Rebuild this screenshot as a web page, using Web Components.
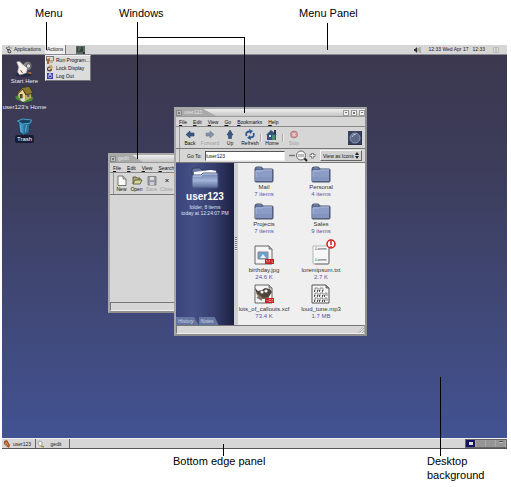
<!DOCTYPE html>
<html lang="en">
<head>
<meta charset="utf-8">
<title>Desktop overview</title>
<style>
  html, body { margin: 0; height: 100%; }
  body { background: #fff; color: #000; font-family: "Liberation Sans", Arial, sans-serif; overflow: hidden; }
</style>
</head>
<body>
<desktop-figure></desktop-figure>

<script>
const define = (name, html, setup) => {
  const tpl = document.createElement('template');
  tpl.innerHTML = html;
  customElements.define(name, class extends HTMLElement {
    constructor() {
      super();
      this.attachShadow({ mode: 'open' }).append(tpl.content.cloneNode(true));
    }
    connectedCallback() { if (setup) setup(this, this.shadowRoot); }
  });
};

/* ---------- icons ---------- */
const folder = `<svg viewBox="0 0 20 17"><path d="M1 3Q1 1 3 1H7Q8 1 9 3H18Q19 3 19 4V15Q19 16 18 16H2Q1 16 1 15Z" fill="#5a6b94" stroke="#4b546b"/><path d="M1.500 5Q1.500 4 2.500 4H8L10 3.500H18V15H2Z" fill="#8b9dc6"/><path d="M2 15V5H8L10 4H18" fill="none" stroke="#a9b8dc"/><path d="M2 11H18V15H2Z" fill="#8395bf"/><path d="M3 2H7" stroke="#7f93bd"/></svg>`;
const icons = {
  folder,
  'folder-large': `<svg viewBox="0 0 28 22"><defs><linearGradient id="g" x2="0" y2="1"><stop stop-color="#6c80ae"/><stop offset=".5" stop-color="#a3b4d8"/><stop offset="1" stop-color="#566894"/></linearGradient></defs><path d="M1 3Q1 1 3 1H9L11 3H26V20H2Z" fill="#66789f" stroke="#303c60"/><path d="M3 8V5L20 3L25 4V8Z" fill="#fff"/><path d="M1 8H10L12 6H27V19Q27 21 25 21H3Q1 21 1 19Z" fill="url(#g)" stroke="#46557f"/><path d="M2 9H10L12 7H26" fill="none" stroke="#c6d2ec"/></svg>`,
  foot: `<svg viewBox="0 0 8 8"><path d="M2 1Q1 3 3 4L5 3M3 4Q2 7 5 7Q7 6 5 4Q4 3 3 4" fill="none" stroke="#444"/><circle cx="4" cy="1" r=".8" fill="#555"/><circle cx="6" cy="2" r=".7" fill="#777"/></svg>`,
  terminal: `<svg viewBox="0 0 9 8"><path d="M0 0H9V8H0Z" fill="#5c6862"/><path d="M1 1H7V6H1Z" fill="#36453f"/><path d="M2 2H5M2 4H4" stroke="#8ea69a" stroke-width=".7"/><path d="M7 6H9V8H7Z" fill="#333"/></svg>`,
  speaker: `<svg viewBox="0 0 8 8"><path d="M1 3H2L4 1V7L2 5H1Z" fill="#333"/><path d="M5 2V6M7 1V7" stroke="#777" stroke-width=".8"/></svg>`,
  note: `<svg viewBox="0 0 6 6"><path d="M.5.5H5.500V5.500H.5Z" fill="#ddd" stroke="#bbb"/><path d="M2 2H4M2 4H4" stroke="#aaa"/></svg>`,
  run: `<svg viewBox="0 0 8 8"><path d="M0 0H8V5H0Z" fill="#777"/><path d="M1 1H7V4H1Z" fill="#dfd9c8"/><path d="M1 3L4 2L3 8H1Z" fill="#a4643c"/><path d="M4 4H7V7H4Z" fill="#b7ae90"/></svg>`,
  lock: `<svg viewBox="0 0 8 8"><circle cx="3.500" cy="5" r="2.500" fill="#4b3a30"/><path d="M3 1H6L7 4L4 6Z" fill="#c9a865"/><circle cx="3" cy="5" r="1" fill="#eee"/></svg>`,
  logout: `<svg viewBox="0 0 8 8"><path d="M1 1H7V7H1Z" fill="#3a3d9c"/><circle cx="4" cy="4" r="1.800" fill="none" stroke="#b9bef5" stroke-width=".8"/><path d="M4 1V4" stroke="#fff" stroke-width=".8"/></svg>`,
  start: `<svg viewBox="0 0 18 17"><ellipse cx="8" cy="14.500" rx="8" ry="2" fill="#252742"/><circle cx="12" cy="6" r="4.500" fill="#8d8d92" stroke="#3c3c42"/><circle cx="13" cy="6" r="2.300" fill="#d8d8da" stroke="#55555c"/><path d="M1 2Q4 0 6 3L8 5L12 8L11 13L8 14L4 15L2 12L3 7Z" fill="#f4f1ea" stroke="#777" stroke-width=".6"/><path d="M5 10L7 13" stroke="#c33"/><path d="M11 13L16 14L15 12" fill="#c98a35"/></svg>`,
  home: `<svg viewBox="0 0 20 17"><path d="M0 11L6 8L19 11L18 15L10 17L2 14Z" fill="#4a8b36"/><path d="M3 6L8 3L11 9V15L4 12Z" fill="#e9d88f"/><path d="M11 9L17 6V12L11 15Z" fill="#c3a95a"/><path d="M2 7L8 1L15 0L19 7L12 9L8 3L3 8Z" fill="#8d7630" stroke="#332b16" stroke-width=".8"/><path d="M5 8H8V13L5 12Z" fill="#51442c"/><path d="M13 9H15V11H13Z" fill="#43567b"/><path d="M5 14L9 12L11 15L8 16Z" fill="#ddd"/></svg>`,
  trash: `<svg viewBox="0 0 16 17"><path d="M2 4L14 3L12 15L7 17L3 14Z" fill="#3c8fbd" stroke="#123a55"/><path d="M7 6L13 4L12 15L7 16Z" fill="#2a7099"/><path d="M1 3L6 1L15 2L14 5L6 6Z" fill="#16415f" stroke="#4ba4cd"/><path d="M4 7L5 14M10 7L9 14" stroke="#6cbbe0" stroke-width=".8"/></svg>`,
  back: `<svg viewBox="0 0 12 11"><path d="M2 5.500L6 2V4H10V7H6V9Z" fill="#3b5a86" stroke="#253c5e" stroke-width=".6"/></svg>`,
  forward: `<svg viewBox="0 0 12 11"><path d="M10 5.500L6 2V4H2V7H6V9Z" fill="#8391a6" stroke="#727f93" stroke-width=".6"/></svg>`,
  up: `<svg viewBox="0 0 12 11"><path d="M6 1L9 6H7.500V9.500H4.500V6H3Z" fill="#3b5a86" stroke="#253c5e" stroke-width=".6"/></svg>`,
  refresh: `<svg viewBox="0 0 12 11"><path d="M2.500 7Q1 2.500 6 2.500M9.500 4Q11 8.500 6 8.500" fill="none" stroke="#315892" stroke-width="1.800"/><path d="M5 0L9 2L6 5ZM7 11L3 9L6 6Z" fill="#315892"/></svg>`,
  house: `<svg viewBox="0 0 12 11"><path d="M0 6L5 1L11 6H10V11H1V6Z" fill="#33527d"/><path d="M8 1H10V5H8Z" fill="#334"/><path d="M3 6H5V8H3Z" fill="#d7e2ee"/><path d="M6 6H9V11H6Z" fill="#4d8b74"/></svg>`,
  stop: `<svg viewBox="0 0 12 11"><circle cx="6" cy="5.500" r="3.500" fill="#cf9a9a" stroke="#b87d7d"/><path d="M4.500 4L7.500 7M7.500 4L4.500 7" stroke="#f3e4e4"/></svg>`,
  throbber: `<svg viewBox="0 0 14 14"><path d="M0 0H14V14H0Z" fill="#39415e"/><circle cx="7" cy="7" r="5" fill="#5c6888" stroke="#8f9ab5"/><path d="M4 6Q5 3 8 3" stroke="#c3cbdd" fill="none"/><path d="M0 14H14V0" fill="none" stroke="#1e2438"/></svg>`,
  zoom: `<svg viewBox="0 0 28 12"><path d="M0 5.500H6" stroke="#777" stroke-width="1.500"/><path d="M15 8L18 11" stroke="#222" stroke-width="2"/><circle cx="12" cy="5.500" r="4.500" fill="#f5f5f5" stroke="#666"/><path d="M10 4V7M12 4V7M14 4V7" stroke="#666" stroke-width=".8"/><path d="M23.500 3V8.500M20.500 5.500H26.500" stroke="#888" stroke-width="3"/><path d="M23.500 4V7.500M21.500 5.500H25.500" stroke="#eee"/></svg>`,
  'new': `<svg viewBox="0 0 12 11"><path d="M2 1H7L10 4V10.500H2Z" fill="#fdfdf8" stroke="#555" stroke-width=".8"/><path d="M7 1V4H10" fill="#ccc" stroke="#555" stroke-width=".7"/></svg>`,
  open: `<svg viewBox="0 0 12 11"><path d="M2 9V2H5L6 3H9V5" fill="#a9ab71" stroke="#4b4d2f" stroke-width=".8"/><path d="M2 9L4 5H11L9 9Z" fill="#d7d99c" stroke="#4b4d2f" stroke-width=".8"/></svg>`,
  save: `<svg viewBox="0 0 12 11"><path d="M2 1.500H10V10H2Z" fill="#9a9fa8" stroke="#777" stroke-width=".8"/><path d="M4 2H8V5H4Z" fill="#ddd"/><path d="M4 7H8V10H4Z" fill="#c9cdd2"/></svg>`,
  close: `<svg viewBox="0 0 12 11"><path d="M4.500 4L7.500 7M7.500 4L4.500 7" stroke="#333"/></svg>`,
  jpg: `<svg viewBox="0 0 20 20"><path d="M1 1H15L18 4V19H1Z" fill="#f5f5f5" stroke="#666"/><path d="M15 1V4H18" fill="#bbb" stroke="#555" stroke-width=".7"/><path d="M4 7H14V14H4Z" fill="#68a2d2" stroke="#888"/><path d="M6 13L9 9L12 13Z" fill="#eee"/><path d="M11 14H20V19H11Z" fill="#c32127"/><path d="M12 15.500H13V17.500M15 17.500V15.500H16M18 15.500V17.500H19" stroke="#f3c9c9" stroke-width=".6" fill="none"/></svg>`,
  xcf: `<svg viewBox="0 0 20 20"><path d="M1 1H15L18 4V19H1Z" fill="#f5f5f5" stroke="#666"/><path d="M15 1V4H18" fill="#bbb" stroke="#555" stroke-width=".7"/><path d="M1 4L4 7L8 6L11 4L16 5L18 8L14 14L8 14L3 11Z" fill="#4d443a"/><path d="M3 9L9 14L15 13L14 15H5Z" fill="#8a7457"/><circle cx="8" cy="8" r="1.600" fill="#fff"/><circle cx="12" cy="7" r="1.600" fill="#fff"/><path d="M3 13L8 16" stroke="#777" stroke-width="1.500"/><path d="M11 14H20V19H11Z" fill="#c32127"/><path d="M12 15.500L14 17.500M17 15.500H15V17.500H17M18 18V15.500H19" stroke="#f3c9c9" stroke-width=".6" fill="none"/></svg>`,
  text: `<svg viewBox="0 0 20 20"><path d="M2 1H18V18Q18 19 17 19H3Q2 19 2 18Z" fill="#f6f6f6" stroke="#b5b5b5"/><path d="M18 3V18Q18 19 17 19H4" fill="none" stroke="#777"/></svg>`,
  mp3: `<svg viewBox="0 0 20 20"><path d="M1 1H15L18 4V19H1Z" fill="#f5f5f5" stroke="#555"/><path d="M15 1V4H18" fill="#999" stroke="#444" stroke-width=".7"/><path d="M4 7V4H7V7M9 7V4H12V7M4 12V9H7V12M9 12V9H12V12M14 12V9H16V12M4 17V14H7V17M9 17V14H12V17M14 17V14H16V17" fill="none" stroke="#777" stroke-width=".8"/><path d="M3 7H4M6 7H7M8 7H9M11 7H12M3 12H4M6 12H7M8 12H9M11 12H12M13 12H14M3 17H4M6 17H7M8 17H9M11 17H12M13 17H14" stroke="#222" stroke-width="1.500"/></svg>`,
  alert: `<svg viewBox="0 0 10 10"><circle cx="5" cy="5" r="4" fill="#fff" stroke="#d8141c" stroke-width="1.500"/><path d="M5 2V6M5 7V8" stroke="#d8141c" stroke-width="1.500"/></svg>`,
  nautilus: `<svg viewBox="0 0 8 8"><path d="M1 1L4 0L7 5L6 8L3 6L1 4Z" fill="#a8502e"/><path d="M3 2L5 5M2 3L4 6" stroke="#e2b56b" stroke-width=".7"/></svg>`,
  gedit: `<svg viewBox="0 0 8 8"><path d="M1 3Q1 1 3 1L5 2V5L3 6Q1 5 1 3Z" fill="#f4f4f0" stroke="#888" stroke-width=".7"/><path d="M4 6L7 7" stroke="#b2913c" stroke-width="1.500"/></svg>`
};
define('gl-icon', `<style>
  :host { display: block; flex: none; width: 8px; height: 8px; }
  svg { display: block; width: 100%; height: 100%; }
</style>`, (el, root) => root.append(document.createRange().createContextualFragment(icons[el.getAttribute('name')])));

/* ---------- annotations ---------- */
define('call-out', `<style>
  :host { position: absolute; font-size: 11px; line-height: 14px; white-space: nowrap; }
</style><slot></slot>`);

define('pointer-line', `<style>
  :host { position: absolute; width: 1px; height: 1px; background: #000; pointer-events: none; }
</style>`);

/* ---------- top panel ---------- */
define('menu-panel', `<style>
  :host { display: flex; align-items: stretch; height: 10px; box-sizing: border-box; background: #d6d6d6; border-bottom: 1px solid #8b8b92; font-size: 5px; line-height: 9px; color: #222; }
  button { font: inherit; color: inherit; border: 0; margin: 0; background: none; display: flex; align-items: center; gap: 1px; padding: 0 4px 0 3px; }
  button.open { background: #f0f0f0; padding: 0 2px; border-right: 1px solid #777; }
  .launch { padding: 0 10px; }
  .launch gl-icon { width: 9px; }
  .tray { margin-left: auto; display: flex; align-items: center; gap: 4px; padding-right: 8px; white-space: nowrap; }
  .tray .speaker { margin-right: 4px; }
  .tray .note { width: 6px; height: 6px; margin-left: 4px; }
</style>
<button type="button"><gl-icon name="foot"></gl-icon>Applications</button>
<button type="button" class="open" aria-expanded="true">Actions</button>
<button type="button" class="launch" aria-label="Terminal"><gl-icon name="terminal"></gl-icon></button>
<div class="tray"><gl-icon class="speaker" name="speaker"></gl-icon><time>12:33 Wed Apr 17</time><time>12:33</time><gl-icon class="note" name="note"></gl-icon></div>`);

define('pop-menu', `<style>
  :host { position: absolute; box-sizing: border-box; width: 46px; background: #dcdcdc; border: 1px solid; border-color: #f2f2f2 #777 #777 #f2f2f2; font-size: 5px; color: #111; }
  button { display: flex; align-items: center; gap: 2px; width: 100%; height: 8px; padding: 0; border: 0; background: none; font: inherit; color: inherit; white-space: nowrap; line-height: 8px; }
</style>
<button type="button"><gl-icon name="run"></gl-icon>Run Program...</button>
<button type="button"><gl-icon name="lock"></gl-icon>Lock Display</button>
<button type="button"><gl-icon name="logout"></gl-icon>Log Out</button>`);

define('desk-icon', `<style>
  :host { position: absolute; left: 0; width: 45px; display: flex; flex-direction: column; align-items: center; color: #e8e8f0; font-size: 6px; line-height: 8px; white-space: nowrap; }
  gl-icon { width: 19px; height: 17px; }
  :host([selected]) span { background: #191b2e; color: #fff; border-radius: 2px; padding: 0 2px; }
</style><span><slot></slot></span>`, (el, root) => {
  const icon = document.createElement('gl-icon');
  icon.setAttribute('name', el.getAttribute('icon'));
  root.querySelector('span').before(icon);
});

/* ---------- windows ---------- */
define('app-window', `<style>
  :host { position: absolute; display: flex; flex-direction: column; box-sizing: border-box; background: #d6d6d6; border: 2px solid #8f8f8f; border-top-color: #a8a8a8; border-left-color: #a8a8a8; color: #111; font-size: 5px; overflow: hidden; }
  header { display: flex; align-items: center; height: 7px; flex: none; gap: 2px; background: linear-gradient(#eee, #c4c4c4); border-bottom: 1px solid #999; line-height: 7px; }
  .name { display: flex; align-items: center; gap: 2px; background: #a9a9a9; color: #e4e4e4; padding-right: 14px; height: 7px; clip-path: polygon(0 0, 68% 0, 100% 100%, 0 100%); }
  .grow { flex: 1; }
  button { width: 6px; height: 6px; border: 1px solid #9a9a9a; background: #eee; padding: 0; display: grid; place-items: center; flex: none; box-sizing: border-box; }
  button i { width: 2px; height: 1px; background: #777; }
  button.sq i { height: 2px; }
  .name button { background: #bbb; border-color: #8a8a8a; }
  nav { display: flex; gap: 6px; height: 10px; padding-left: 3px; box-sizing: border-box; flex: none; line-height: 10px; border-bottom: 1px solid #888; overflow: hidden; }
  a { display: block; color: inherit; text-decoration: none; white-space: nowrap; }
  a::first-letter { text-decoration: underline; }
  footer { height: 9px; flex: none; box-sizing: border-box; border: 1px solid; border-color: #777 #aaa #eee #777; margin-top: auto; display: flex; justify-content: flex-end; align-items: flex-end; }
  footer i { width: 7px; height: 7px; background: repeating-linear-gradient(135deg, #aaa 0 1px, #e0e0e0 1px 2px); clip-path: polygon(100% 0, 100% 100%, 0 100%); }
</style>
<header><div class="name"><button type="button" class="sq" aria-label="Window menu"><i></i></button><span></span></div><div class="grow"></div><button type="button" aria-label="Minimize"><i></i></button><button type="button" class="sq" aria-label="Maximize"><i></i></button><button type="button" aria-label="Close window"><i></i></button></header>
<nav></nav>
<slot></slot>
<footer><i></i></footer>`, (el, root) => {
  root.querySelector('span').textContent = el.getAttribute('name');
  root.querySelector('nav').innerHTML = el.getAttribute('menus').split(' ').map(m => `<a href="#">${m}</a>`).join('');
});

define('tool-bar', `<style>
  :host { display: flex; align-items: center; flex: none; height: 22px; box-sizing: border-box; border-bottom: 1px solid #777; padding-right: 3px; overflow: hidden; }
  .grip { width: 3px; align-self: stretch; border-right: 1px solid #999; flex: none; }
</style><div class="grip"></div><slot></slot>`);

define('tool-button', `<style>
  :host { display: block; flex: none; width: 20px; }
  :host([narrow]) { width: 15px; }
  button { display: flex; flex-direction: column; align-items: center; width: 100%; padding: 0; border: 0; background: none; font: inherit; line-height: 7px; color: inherit; white-space: nowrap; }
  button:disabled { color: #a2a2a2; }
  gl-icon { width: 12px; height: 11px; }
</style><button type="button"><slot></slot></button>`, (el, root) => {
  const button = root.querySelector('button'), icon = document.createElement('gl-icon');
  icon.setAttribute('name', el.getAttribute('icon'));
  button.disabled = el.hasAttribute('off');
  button.prepend(icon);
});

define('tool-gap', `<style>
  :host { width: 2px; height: 8px; flex: none; box-sizing: border-box; border-left: 1px solid #aaa; border-right: 1px solid #eee; }
</style>`);

define('location-bar', `<style>
  :host { display: flex; align-items: center; flex: none; height: 14px; box-sizing: border-box; border-bottom: 1px solid #777; padding-right: 3px; }
  .grip { width: 3px; align-self: stretch; border-right: 1px solid #999; }
  label { margin: 0 3px 0 7px; white-space: nowrap; }
  input { flex: 1; min-width: 0; height: 10px; box-sizing: border-box; border: 1px solid; border-color: #555 #eee #eee #555; background: #fff; font: inherit; color: inherit; padding: 0; border-radius: 0; }
  .zoom { width: 28px; height: 12px; margin: 0 3px 0 4px; }
  .view { position: relative; flex: none; }
  select { appearance: none; display: block; width: 42px; height: 11px; box-sizing: border-box; border: 1px solid; border-color: #f5f5f5 #666 #666 #f5f5f5; border-radius: 0; background: #d2d2d2; font: inherit; color: inherit; padding: 0 0 0 2px; }
  svg { position: absolute; right: 3px; top: 2px; width: 4px; height: 7px; pointer-events: none; }
</style><div class="grip"></div>
<label for="path">Go To:</label><input id="path" value="/user123">
<gl-icon class="zoom" name="zoom"></gl-icon>
<div class="view"><select aria-label="View"><option>View as Icons</option></select><svg viewBox="0 0 4 7"><path d="M0 3L2 0L4 3ZM0 4L2 7L4 4Z" fill="#222"/></svg></div>`);

define('side-pane', `<style>
  :host { display: flex; flex-direction: column; align-items: center; flex: none; width: 58px; background: linear-gradient(90deg, #3b4579, #444f86 30%, #363e6e 65%, #1c2041); color: #dfe3f3; line-height: 6px; white-space: nowrap; padding-top: 4px; box-sizing: border-box; }
  gl-icon { width: 28px; height: 22px; }
  h1 { margin: 2px 0; font-size: 10px; line-height: 11px; color: #fff; }
  .tabs { margin-top: auto; align-self: stretch; display: flex; }
  button { font: inherit; font-style: italic; line-height: 8px; height: 8px; border: 0; color: #d0d8ec; background: #64759e; padding: 0 5px 0 2px; clip-path: polygon(0 0, 80% 0, 100% 100%, 0 100%); }
</style><gl-icon name="folder-large"></gl-icon><h1>user123</h1><div>folder, 8 items</div><div>today at 12:24:07 PM</div>
<div class="tabs"><button type="button">History</button><button type="button">Notes</button></div>`);

define('file-item', `<style>
  :host { position: relative; display: flex; flex-direction: column; align-items: center; font-size: 6px; line-height: 7px; white-space: nowrap; color: #333; }
  gl-icon { width: 20px; height: 17px; margin: 2px 0 1px; }
  :host([file]) .icon { height: 20px; margin: 0 0 2px; }
  .info { color: #5a55a0; }
  :host([file]) .alert { position: absolute; width: 10px; height: 10px; top: -6px; left: 31px; margin: 0; }
  .words { position: absolute; top: -2px; left: 18px; width: 16px; text-align: center; font: italic 4px/11px "Liberation Sans", sans-serif; color: #333; }
</style><span><slot></slot></span><span class="info"></span>`, (el, root) => {
  const icon = document.createElement('gl-icon');
  icon.className = 'icon';
  icon.setAttribute('name', el.getAttribute('icon'));
  root.querySelector('span').before(icon);
  root.querySelector('.info').textContent = el.getAttribute('info');
  if (el.hasAttribute('alert')) root.append(document.createRange().createContextualFragment(
    '<div class="words">Lorem<br>Lorem</div><gl-icon class="alert" name="alert"></gl-icon>'));
});

define('file-view', `<style>
  :host { display: flex; flex: 1; min-height: 0; background: #efefef; }
  .split { width: 4px; flex: none; background: #d0d0d0; display: grid; place-items: center; }
  .split i { width: 2px; height: 14px; background: repeating-linear-gradient(#777 0 1px, #e5e5e5 1px 2px); }
  .files { flex: 1; display: grid; grid-template-columns: 52px 52px; column-gap: 5px; align-content: start; row-gap: 3px; padding-top: 1px; }
  .gap { grid-column: 1 / -1; height: 4px; }
</style><side-pane></side-pane><div class="split"><i></i></div>
<div class="files">
  <file-item icon="folder" info="7 items">Mail</file-item>
  <file-item icon="folder" info="4 items">Personal</file-item>
  <file-item icon="folder" info="7 items">Projects</file-item>
  <file-item icon="folder" info="9 items">Sales</file-item>
  <div class="gap"></div>
  <file-item file icon="jpg" info="24.6 K">birthday.jpg</file-item>
  <file-item file icon="text" info="2.7 K" alert>loremipsum.txt</file-item>
  <file-item file icon="xcf" info="73.4 K">lots_of_callouts.xcf</file-item>
  <file-item file icon="mp3" info="1.7 MB">loud_tune.mp3</file-item>
</div>`);

/* ---------- bottom panel ---------- */
define('edge-panel', `<style>
  :host { display: flex; align-items: stretch; height: 11px; box-sizing: border-box; background: #d6d6d6; border-top: 1px solid #eee; border-bottom: 1px solid #555; font-size: 5px; color: #222; }
  button.task { display: flex; align-items: center; width: 34px; padding: 0 2px 0 1px; border: 0; border-right: 1px solid #666; background: none; font: inherit; color: inherit; }
  .task span { flex: 1; text-align: center; }
  .pager { margin-left: auto; display: flex; border: 1px solid #666; }
  .pager button { position: relative; width: 10px; padding: 0; border: 0; border-right: 1px solid #aaa; background: #969696; box-sizing: border-box; }
  .pager button:first-child { background: #14145c; }
  .pager i { position: absolute; left: 3px; top: 2px; width: 4px; height: 3px; background: #ddd; }
  .pager button:last-child i { top: 1px; height: 2px; background: #bbb; border-top: 1px solid #555; box-sizing: border-box; }
</style>
<button type="button" class="task"><gl-icon name="nautilus"></gl-icon><span>user123</span></button>
<button type="button" class="task"><gl-icon name="gedit"></gl-icon><span>gedit</span></button>
<div class="pager"><button type="button" aria-label="Workspace 1"><i></i></button><button type="button" aria-label="Workspace 2"></button><button type="button" aria-label="Workspace 3"></button><button type="button" aria-label="Workspace 4"><i></i></button></div>`);

define('desktop-screen', `<style>
  :host { display: flex; flex-direction: column; flex: 1; min-width: 0; }
  .canvas { position: relative; flex: 1; background: linear-gradient(#3b384f, #3d3d5b 30%, #40497a 70%, #425292); }
  .d1 { top: 5px; } .d2 { top: 31px; } .d3 { top: 63px; }
  pop-menu { left: 43px; top: 0; }
  .gedit { left: 106px; top: 98px; width: 150px; height: 160px; }
  .nautilus { left: 172px; top: 52px; width: 193px; height: 229px; }
  .throbber { width: 14px; height: 14px; margin-left: auto; }
</style>
<menu-panel></menu-panel>
<div class="canvas">
  <desk-icon class="d1" icon="start">Start Here</desk-icon>
  <desk-icon class="d2" icon="home">user123's Home</desk-icon>
  <desk-icon class="d3" icon="trash" selected>Trash</desk-icon>
  <pop-menu></pop-menu>
  <app-window class="gedit" name="gedit" menus="File Edit View Search">
    <tool-bar>
      <tool-button narrow icon="new">New</tool-button>
      <tool-button narrow icon="open">Open</tool-button>
      <tool-button narrow icon="save" off>Save</tool-button>
      <tool-button narrow icon="close" off>Close</tool-button>
    </tool-bar>
  </app-window>
  <app-window class="nautilus" name="user123" menus="File Edit View Go Bookmarks Help">
    <tool-bar>
      <tool-button icon="back">Back</tool-button>
      <tool-button icon="forward" off>Forward</tool-button>
      <tool-button icon="up">Up</tool-button>
      <tool-button icon="refresh">Refresh</tool-button>
      <tool-gap></tool-gap>
      <tool-button icon="house">Home</tool-button>
      <tool-gap></tool-gap>
      <tool-button icon="stop" off>Stop</tool-button>
      <gl-icon class="throbber" name="throbber"></gl-icon>
    </tool-bar>
    <location-bar></location-bar>
    <file-view></file-view>
  </app-window>
</div>
<edge-panel></edge-panel>`);

define('desktop-figure', `<style>
  :host { position: relative; display: flex; height: 100vh; box-sizing: border-box; padding: 45px 4px 38px 2px; }
  .menu { left: 35px; top: 6px; }
  .windows { left: 119px; top: 6px; }
  .panel { left: 299px; top: 6px; }
  .edge { left: 173px; top: 454px; }
  .back { left: 427px; top: 454px; }
  .l1 { left: 46px; top: 22px; height: 28px; }
  .l2 { left: 137px; top: 22px; height: 137px; }
  .l3 { left: 137px; top: 37px; width: 108px; }
  .l4 { left: 244px; top: 37px; height: 76px; }
  .l5 { left: 327px; top: 23px; height: 27px; }
  .l6 { left: 223px; top: 444px; height: 12px; }
  .l7 { left: 440px; top: 377px; height: 79px; }
</style>
<desktop-screen></desktop-screen>
<call-out class="menu">Menu</call-out>
<call-out class="windows">Windows</call-out>
<call-out class="panel">Menu Panel</call-out>
<call-out class="edge">Bottom edge panel</call-out>
<call-out class="back">Desktop<br>background</call-out>
<pointer-line class="l1"></pointer-line>
<pointer-line class="l2"></pointer-line>
<pointer-line class="l3"></pointer-line>
<pointer-line class="l4"></pointer-line>
<pointer-line class="l5"></pointer-line>
<pointer-line class="l6"></pointer-line>
<pointer-line class="l7"></pointer-line>`);
</script>
</body>
</html>
